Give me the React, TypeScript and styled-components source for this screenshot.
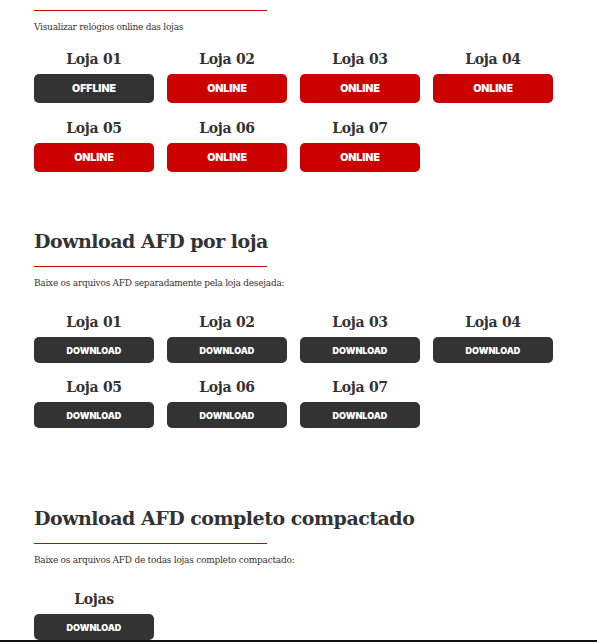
import React from "react";
import styled, { createGlobalStyle } from "styled-components";

const Global = createGlobalStyle`
  html, body { margin: 0; padding: 0; background: #fff; }
  body { font-family: "DejaVu Serif", "Liberation Serif", serif; color: #333; }
`;

const Page = styled.div`
  width: 597px;
  height: 642px;
  overflow: hidden;
  display: flex;
  flex-direction: column;
  box-sizing: border-box;
`;

const Content = styled.main`
  flex: 1;
  padding: 10px 0 0 34px;
  display: flex;
  flex-direction: column;
`;

const Section = styled.section<{ $top: number }>`
  display: flex;
  flex-direction: column;
  margin-top: ${(p) => p.$top}px;
`;

const Heading = styled.h2`
  margin: 0 0 12px;
  font-family: "DejaVu Serif", serif;
  font-weight: 700;
  font-size: 19px;
  line-height: 26px;
  color: #333;
  letter-spacing: -0.5px;
`;

const Divider = styled.hr`
  margin: 0;
  border: 0;
  width: 233px;
  height: 1px;
  background: #c80000;
`;

const Description = styled.p`
  margin: 10px 0 0;
  font-size: 9px;
  line-height: 12px;
  color: #333;
  letter-spacing: -0.25px;
`;

const Grid = styled.div<{ $top: number; $rowGap: number }>`
  display: grid;
  grid-template-columns: repeat(4, 120px);
  column-gap: 13px;
  row-gap: ${(p) => p.$rowGap}px;
  margin-top: ${(p) => p.$top}px;
`;

const Card = styled.div`
  display: flex;
  flex-direction: column;
  align-items: center;
`;

const StoreName = styled.h3`
  margin: 1px 0 5px;
  font-family: "DejaVu Serif", serif;
  font-weight: 700;
  font-size: 14px;
  line-height: 20px;
  color: #333;
  letter-spacing: -0.3px;
`;

const Button = styled.button<{ $variant: "red" | "dark"; $h: number; $fs: number }>`
  width: 120px;
  height: ${(p) => p.$h}px;
  border: 0;
  border-radius: 5px;
  background: ${(p) => (p.$variant === "red" ? "#cc0000" : "#333333")};
  color: #fff;
  font-family: "Inter", "Open Sans", sans-serif;
  font-weight: 900;
  font-size: ${(p) => p.$fs}px;
  letter-spacing: 0;
  padding: 0;
  cursor: pointer;
`;

const Footer = styled.footer`
  height: 2px;
  background: #111;
`;

const stores = ["01", "02", "03", "04", "05", "06", "07"];
const status: Record<string, boolean> = { "01": false };

export default function App() {
  return (
    <>
      <Global />
      <Page>
        <Content>
          <Section $top={0}>
            <Divider />
            <Description>Visualizar relógios online das lojas</Description>
            <Grid $top={15} $rowGap={14}>
              {stores.map((s) => {
                const online = status[s] !== false;
                return (
                  <Card key={s}>
                    <StoreName>Loja {s}</StoreName>
                    <Button $variant={online ? "red" : "dark"} $h={29} $fs={10.5}>
                      {online ? "ONLINE" : "OFFLINE"}
                    </Button>
                  </Card>
                );
              })}
            </Grid>
          </Section>

          <Section $top={56}>
            <Heading>Download AFD por loja</Heading>
            <Divider />
            <Description>Baixe os arquivos AFD separadamente pela loja desejada:</Description>
            <Grid $top={22} $rowGap={13}>
              {stores.map((s) => (
                <Card key={s}>
                  <StoreName>Loja {s}</StoreName>
                  <Button $variant="dark" $h={26} $fs={9}>DOWNLOAD</Button>
                </Card>
              ))}
            </Grid>
          </Section>

          <Section $top={77}>
            <Heading>Download AFD completo compactado</Heading>
            <Divider />
            <Description>Baixe os arquivos AFD de todas lojas completo compactado:</Description>
            <Grid $top={22} $rowGap={13}>
              <Card>
                <StoreName>Lojas</StoreName>
                <Button $variant="dark" $h={26} $fs={9}>DOWNLOAD</Button>
              </Card>
            </Grid>
          </Section>
        </Content>
        <Footer />
      </Page>
    </>
  );
}
